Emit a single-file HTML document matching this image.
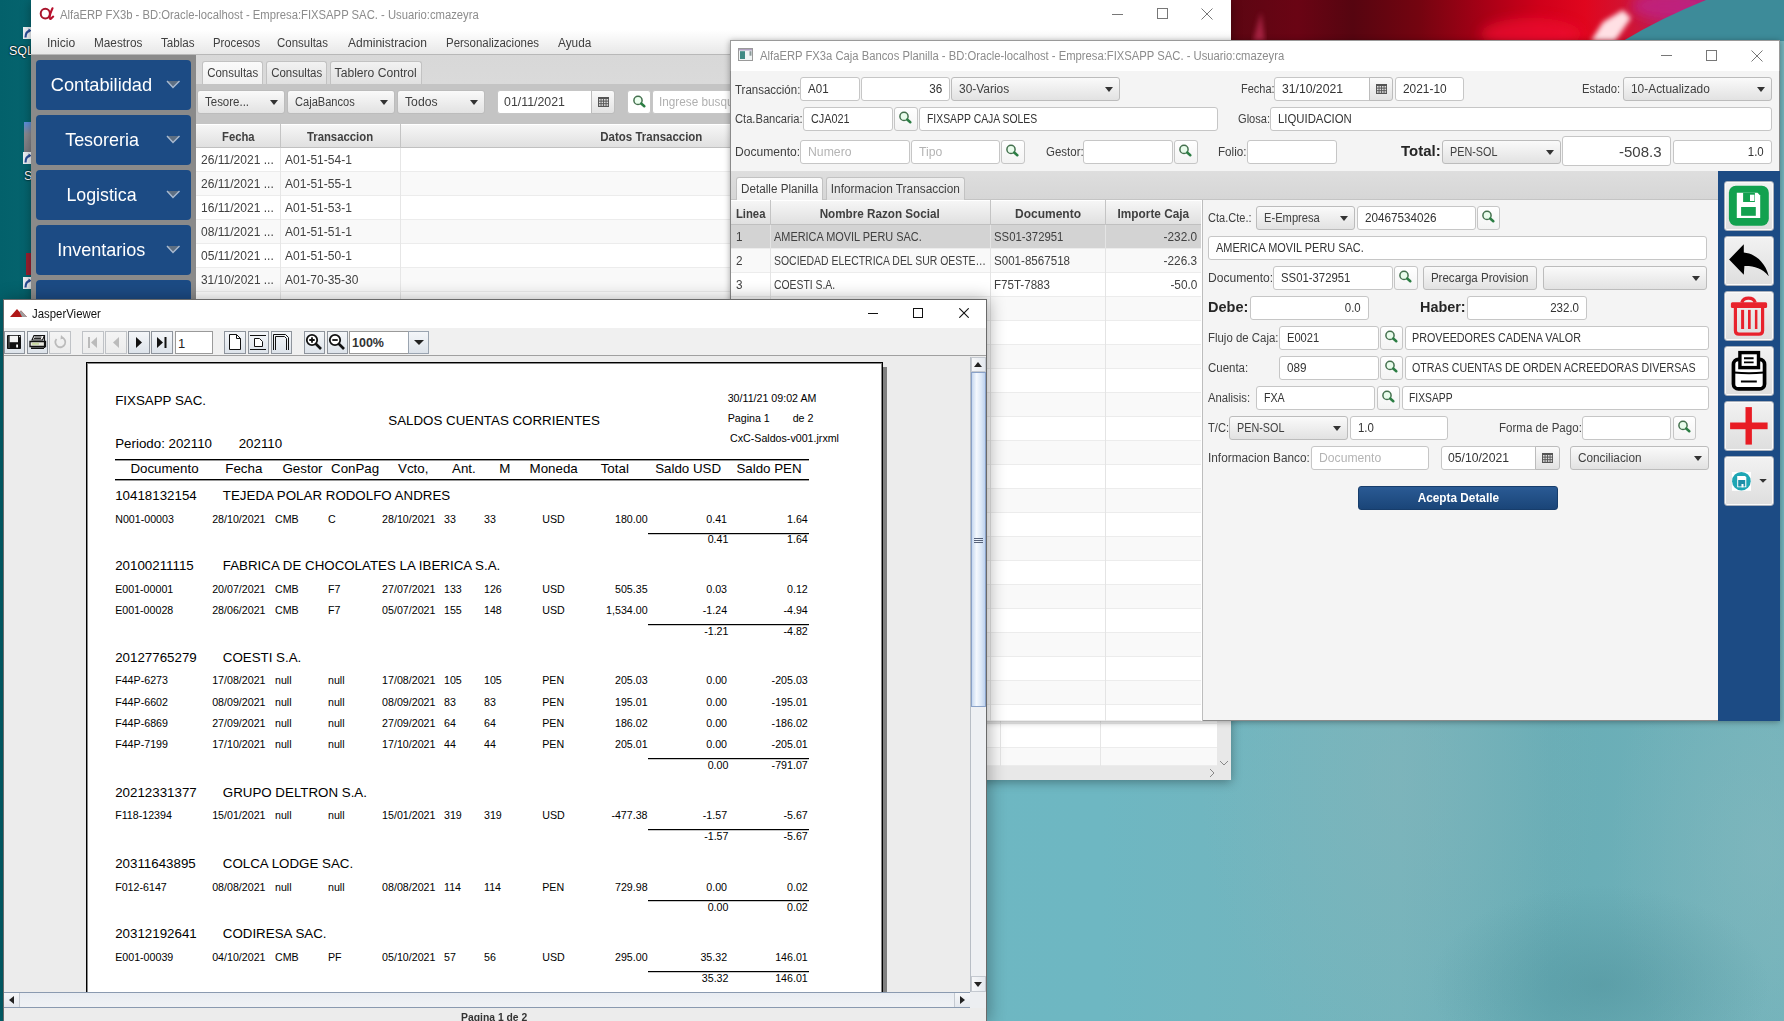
<!DOCTYPE html>
<html><head><meta charset="utf-8">
<style>
*{margin:0;padding:0;box-sizing:border-box}
html,body{width:1784px;height:1021px;overflow:hidden;position:relative;font-family:"Liberation Sans",sans-serif;color:#333}
.a{position:absolute}
.t{position:absolute;white-space:nowrap;line-height:1}
.tf{position:absolute;background:#fff;border:1px solid #c6c6c6;border-radius:3px}
.bt{position:absolute;background:linear-gradient(#fafafa,#e2e2e2);border:1px solid #bcbcbc;border-radius:3px}
.arr{position:absolute;width:0;height:0;border-left:4px solid transparent;border-right:4px solid transparent;border-top:5px solid #333}
.ui{font-size:12.5px;color:#333}
.ph{color:#b0b0b0}
.sb{position:absolute;background:#1c4b84;border-radius:4px}
.sbt{position:absolute;color:#fff;font-size:19px;white-space:nowrap;line-height:1}
.rep{position:absolute;white-space:nowrap;line-height:1;color:#000}
.r10{font-size:13.3px}
.r8{font-size:10.6px}
</style></head><body>

<div class="a" style="left:0;top:0;width:1784px;height:1021px;background:radial-gradient(ellipse 170px 100px at 1600px 985px,rgba(70,135,145,.4),rgba(70,135,145,0)),radial-gradient(ellipse 200px 300px at 1400px 780px,rgba(135,180,185,.45),rgba(135,180,185,0)),radial-gradient(ellipse 150px 250px at 1760px 850px,rgba(135,185,190,.5),rgba(135,185,190,0)),linear-gradient(90deg,#6cb8c3 0px,#6eb7c2 1100px,#74b4bc 1400px,#68adb6 1550px,#73b3bb 1784px)"></div>
<div class="a" style="left:0;top:0;width:32px;height:1021px;background:linear-gradient(90deg,#03616b,#05646e)"></div>
<svg class="a" style="left:23px;top:27px" width="9" height="12"><rect x="0" y="0" width="9" height="12" fill="#eef2f6"/><path d="M2.5 10.5Q2.5 4.5 7 3.5" stroke="#2a4f9a" stroke-width="2.2" fill="none"/><path d="M5.5 1.5L8.5 3.5L5.5 6Z" fill="#2a4f9a"/></svg>
<div class="t" style="left:9px;top:45px;font-size:12.5px;color:#fff;text-shadow:0 0 2px #000,0 0 1px #000">SQL</div>
<div class="a" style="left:24px;top:122px;width:8px;height:30px;background:linear-gradient(#5a90e0,#8a8a90 40%,#7a7a80)"></div>
<svg class="a" style="left:23px;top:152px" width="9" height="12"><rect x="0" y="0" width="9" height="12" fill="#eef2f6"/><path d="M2.5 10.5Q2.5 4.5 7 3.5" stroke="#2a4f9a" stroke-width="2.2" fill="none"/><path d="M5.5 1.5L8.5 3.5L5.5 6Z" fill="#2a4f9a"/></svg>
<div class="t" style="left:24px;top:170px;font-size:12.5px;color:#fff;text-shadow:0 0 2px #000,0 0 1px #000">S</div>
<div class="a" style="left:26px;top:253px;width:6px;height:22px;background:#9a2030"></div>
<svg class="a" style="left:23px;top:277px" width="9" height="12"><rect x="0" y="0" width="9" height="12" fill="#eef2f6"/><path d="M2.5 10.5Q2.5 4.5 7 3.5" stroke="#2a4f9a" stroke-width="2.2" fill="none"/><path d="M5.5 1.5L8.5 3.5L5.5 6Z" fill="#2a4f9a"/></svg>
<svg class="a" style="left:1231px;top:0" width="553" height="41"><defs><filter id="bl" x="-50%" y="-50%" width="200%" height="200%"><feGaussianBlur stdDeviation="6"/></filter><filter id="bl2"><feGaussianBlur stdDeviation="2.5"/></filter><linearGradient id="rg" x1="0" x2="1" y1="0" y2="0"><stop offset="0" stop-color="#5c0612"/><stop offset=".12" stop-color="#6a0414"/><stop offset=".22" stop-color="#560510"/><stop offset=".34" stop-color="#740410"/><stop offset=".46" stop-color="#a80016"/><stop offset=".56" stop-color="#d0001a"/><stop offset=".64" stop-color="#e0061e"/><stop offset=".72" stop-color="#d01434"/><stop offset=".82" stop-color="#b02068"/></linearGradient></defs><rect x="0" y="0" width="553" height="41" fill="url(#rg)"/><ellipse cx="300" cy="34" rx="50" ry="16" fill="#f01030" opacity=".7" filter="url(#bl)"/><ellipse cx="440" cy="6" rx="40" ry="14" fill="#c02080" opacity=".9" filter="url(#bl)"/><path d="M360 41L372 22L392 10L400 18L384 41Z" fill="#ffe0e4" filter="url(#bl2)"/><path d="M22 41L30 12L34 41Z" fill="#e84070" opacity=".5" filter="url(#bl2)"/><path d="M392 41Q430 18 475 0H553V41Z" fill="#3d8b99"/></svg>
<div class="a" style="left:31px;top:0;width:1200px;height:780px;background:#f4f4f4;box-shadow:0 2px 10px rgba(0,0,0,.35)"></div>
<div class="a" style="left:31px;top:0;width:1200px;height:30px;background:#fff"></div>
<svg class="a" style="left:38px;top:6px" width="18" height="15"><ellipse cx="7.3" cy="7.6" rx="4.6" ry="4.9" stroke="#a8142c" stroke-width="2" fill="none"/><path d="M14.5 2.3C12.8 6 11.6 9 11.6 11.5C11.6 13 12.4 13.5 13.4 12.3L15.2 10.6" stroke="#b8102c" stroke-width="2.1" fill="none" stroke-linecap="round"/></svg>
<div class="t" style="left:60.0px;top:8.64px;font-size:12px;color:#8c8c8c;transform:scaleX(0.9396);transform-origin:0 0;">AlfaERP FX3b - BD:Oracle-localhost - Empresa:FIXSAPP SAC. - Usuario:cmazeyra</div>
<div class="a" style="left:1112px;top:14px;width:11px;height:1px;background:#777"></div>
<div class="a" style="left:1157px;top:8px;width:11px;height:11px;border:1px solid #777"></div>
<svg class="a" style="left:1201px;top:8px" width="12" height="12"><path d="M0.5 0.5L11.5 11.5M11.5 0.5L0.5 11.5" stroke="#777" stroke-width="1"/></svg>
<div class="a" style="left:31px;top:30px;width:1200px;height:25px;background:linear-gradient(#ffffff,#f6f6f6 40%,#e8e8e8);border-bottom:1px solid #b8b8b8"></div>
<div class="t" style="left:47.0px;top:36.84px;font-size:12px;color:#404040;transform:scaleX(1.0056);transform-origin:0 0;">Inicio</div>
<div class="t" style="left:94.0px;top:36.84px;font-size:12px;color:#404040;transform:scaleX(0.9821);transform-origin:0 0;">Maestros</div>
<div class="t" style="left:161.0px;top:36.84px;font-size:12px;color:#404040;transform:scaleX(0.9673);transform-origin:0 0;">Tablas</div>
<div class="t" style="left:213.0px;top:36.84px;font-size:12px;color:#404040;transform:scaleX(0.9400);transform-origin:0 0;">Procesos</div>
<div class="t" style="left:277.0px;top:36.84px;font-size:12px;color:#404040;transform:scaleX(0.9552);transform-origin:0 0;">Consultas</div>
<div class="t" style="left:348.0px;top:36.84px;font-size:12px;color:#404040;transform:scaleX(1.0029);transform-origin:0 0;">Administracion</div>
<div class="t" style="left:446.0px;top:36.84px;font-size:12px;color:#404040;transform:scaleX(0.9548);transform-origin:0 0;">Personalizaciones</div>
<div class="t" style="left:558.0px;top:36.84px;font-size:12px;color:#404040;transform:scaleX(0.9852);transform-origin:0 0;">Ayuda</div>
<div class="a" style="left:31px;top:55px;width:165px;height:725px;background:#8a8a8a"></div>
<div class="sb" style="left:36px;top:60px;width:155px;height:50px"></div>
<div class="t" style="left:50.1px;top:76.04px;font-size:18.5px;color:#fff;transform:scaleX(0.9863);transform-origin:50% 0;">Contabilidad</div>
<svg class="a" style="left:166px;top:80px" width="14" height="9"><path d="M1 1L7 7.5L13.5 1Z" fill="#5e6f82" stroke="none"/><path d="M1 1L7 7.5L13.5 1" stroke="#a9bad0" stroke-width="1.4" fill="none"/></svg>
<div class="sb" style="left:36px;top:115px;width:155px;height:50px"></div>
<div class="t" style="left:63.5px;top:131.04px;font-size:18.5px;color:#fff;transform:scaleX(0.9696);transform-origin:50% 0;">Tesoreria</div>
<svg class="a" style="left:166px;top:135px" width="14" height="9"><path d="M1 1L7 7.5L13.5 1Z" fill="#5e6f82" stroke="none"/><path d="M1 1L7 7.5L13.5 1" stroke="#a9bad0" stroke-width="1.4" fill="none"/></svg>
<div class="sb" style="left:36px;top:170px;width:155px;height:50px"></div>
<div class="t" style="left:65.0px;top:186.04px;font-size:18.5px;color:#fff;transform:scaleX(0.9617);transform-origin:50% 0;">Logistica</div>
<svg class="a" style="left:166px;top:190px" width="14" height="9"><path d="M1 1L7 7.5L13.5 1Z" fill="#5e6f82" stroke="none"/><path d="M1 1L7 7.5L13.5 1" stroke="#a9bad0" stroke-width="1.4" fill="none"/></svg>
<div class="sb" style="left:36px;top:225px;width:155px;height:50px"></div>
<div class="t" style="left:56.3px;top:241.04px;font-size:18.5px;color:#fff;transform:scaleX(0.9742);transform-origin:50% 0;">Inventarios</div>
<svg class="a" style="left:166px;top:245px" width="14" height="9"><path d="M1 1L7 7.5L13.5 1Z" fill="#5e6f82" stroke="none"/><path d="M1 1L7 7.5L13.5 1" stroke="#a9bad0" stroke-width="1.4" fill="none"/></svg>
<div class="sb" style="left:36px;top:280px;width:155px;height:50px"></div>
<div class="a" style="left:196px;top:55px;width:1035px;height:725px;background:#c4c4c4"></div>
<div class="a" style="left:196px;top:55px;width:1035px;height:29px;background:linear-gradient(#d8d8d8,#dadada)"></div>
<div class="a" style="left:202px;top:61px;width:61px;height:23px;background:linear-gradient(#fbfbfb,#f0f0f0);border:1px solid #c2c2c2;border-bottom:none;border-radius:3px 3px 0 0"></div>
<div class="t" style="left:205.8px;top:66.84px;font-size:12px;color:#404040;transform:scaleX(0.9552);transform-origin:50% 0;">Consultas</div>
<div class="a" style="left:266px;top:61px;width:61px;height:23px;background:linear-gradient(#f2f2f2,#e0e0e0);border:1px solid #c2c2c2;border-bottom:none;border-radius:3px 3px 0 0"></div>
<div class="t" style="left:269.8px;top:66.84px;font-size:12px;color:#404040;transform:scaleX(0.9552);transform-origin:50% 0;">Consultas</div>
<div class="a" style="left:330px;top:61px;width:92px;height:23px;background:linear-gradient(#f2f2f2,#e0e0e0);border:1px solid #c2c2c2;border-bottom:none;border-radius:3px 3px 0 0"></div>
<div class="t" style="left:335.3px;top:66.84px;font-size:12px;color:#404040;transform:scaleX(1.0104);transform-origin:50% 0;">Tablero Control</div>
<div class="bt" style="left:197px;top:90px;width:88px;height:24px"></div>
<div class="t" style="left:205.0px;top:95.84px;font-size:12px;color:#404040;transform:scaleX(0.9567);transform-origin:0 0;">Tesore...</div>
<div class="arr" style="left:270px;top:100px"></div>
<div class="bt" style="left:287px;top:90px;width:108px;height:24px"></div>
<div class="t" style="left:295.0px;top:95.84px;font-size:12px;color:#404040;transform:scaleX(0.9236);transform-origin:0 0;">CajaBancos</div>
<div class="arr" style="left:380px;top:100px"></div>
<div class="bt" style="left:397px;top:90px;width:88px;height:24px"></div>
<div class="t" style="left:405.0px;top:95.84px;font-size:12px;color:#404040;transform:scaleX(1.0176);transform-origin:0 0;">Todos</div>
<div class="arr" style="left:470px;top:100px"></div>
<div class="tf" style="left:497px;top:90px;width:95px;height:24px;border-radius:3px 0 0 3px"></div>
<div class="t" style="left:504.0px;top:95.84px;font-size:12px;color:#404040;transform:scaleX(1.0306);transform-origin:0 0;">01/11/2021</div>
<div class="bt" style="left:591px;top:90px;width:24px;height:24px;border-radius:0 3px 3px 0"></div>
<svg class="a" style="left:598px;top:97px" width="11" height="10"><rect x="0" y="0" width="11" height="10" fill="#555"/><rect x="1.0" y="2.0" width="1.6" height="1.6" fill="#ddd"/><rect x="3.5" y="2.0" width="1.6" height="1.6" fill="#ddd"/><rect x="6.0" y="2.0" width="1.6" height="1.6" fill="#ddd"/><rect x="8.5" y="2.0" width="1.6" height="1.6" fill="#ddd"/><rect x="1.0" y="4.6" width="1.6" height="1.6" fill="#ddd"/><rect x="3.5" y="4.6" width="1.6" height="1.6" fill="#ddd"/><rect x="6.0" y="4.6" width="1.6" height="1.6" fill="#ddd"/><rect x="8.5" y="4.6" width="1.6" height="1.6" fill="#ddd"/><rect x="1.0" y="7.2" width="1.6" height="1.6" fill="#ddd"/><rect x="3.5" y="7.2" width="1.6" height="1.6" fill="#ddd"/><rect x="6.0" y="7.2" width="1.6" height="1.6" fill="#ddd"/><rect x="8.5" y="7.2" width="1.6" height="1.6" fill="#ddd"/></svg>
<div class="tf" style="left:627px;top:90px;width:24px;height:24px"></div>
<svg class="a" style="left:632px;top:95px" width="16" height="16"><circle cx="6" cy="5.4" r="4.1" stroke="#44704e" stroke-width="1.5" fill="rgba(200,255,210,.35)"/><path d="M9.2 8.6L12.3 11.2" stroke="#2c7e44" stroke-width="2.6" stroke-linecap="round"/></svg>
<div class="tf" style="left:652px;top:90px;width:200px;height:24px"></div>
<div class="t" style="left:659.0px;top:95.84px;font-size:12px;color:#b0b0b0;transform:scaleX(0.9799);transform-origin:0 0;">Ingrese busqueda</div>
<div class="a" style="left:196px;top:124px;width:1021px;height:642px;background:#fff"></div>
<div class="a" style="left:196px;top:148px;width:1021px;height:24px;background:#fff;border-bottom:1px solid #ececec"></div>
<div class="a" style="left:196px;top:172px;width:1021px;height:24px;background:#f9f9f9;border-bottom:1px solid #ececec"></div>
<div class="a" style="left:196px;top:196px;width:1021px;height:24px;background:#fff;border-bottom:1px solid #ececec"></div>
<div class="a" style="left:196px;top:220px;width:1021px;height:24px;background:#f9f9f9;border-bottom:1px solid #ececec"></div>
<div class="a" style="left:196px;top:244px;width:1021px;height:24px;background:#fff;border-bottom:1px solid #ececec"></div>
<div class="a" style="left:196px;top:268px;width:1021px;height:24px;background:#f9f9f9;border-bottom:1px solid #ececec"></div>
<div class="a" style="left:196px;top:292px;width:1021px;height:24px;background:#fff;border-bottom:1px solid #ececec"></div>
<div class="a" style="left:196px;top:316px;width:1021px;height:24px;background:#f9f9f9;border-bottom:1px solid #ececec"></div>
<div class="a" style="left:196px;top:340px;width:1021px;height:24px;background:#fff;border-bottom:1px solid #ececec"></div>
<div class="a" style="left:196px;top:364px;width:1021px;height:24px;background:#f9f9f9;border-bottom:1px solid #ececec"></div>
<div class="a" style="left:196px;top:388px;width:1021px;height:24px;background:#fff;border-bottom:1px solid #ececec"></div>
<div class="a" style="left:196px;top:412px;width:1021px;height:24px;background:#f9f9f9;border-bottom:1px solid #ececec"></div>
<div class="a" style="left:196px;top:436px;width:1021px;height:24px;background:#fff;border-bottom:1px solid #ececec"></div>
<div class="a" style="left:196px;top:460px;width:1021px;height:24px;background:#f9f9f9;border-bottom:1px solid #ececec"></div>
<div class="a" style="left:196px;top:484px;width:1021px;height:24px;background:#fff;border-bottom:1px solid #ececec"></div>
<div class="a" style="left:196px;top:508px;width:1021px;height:24px;background:#f9f9f9;border-bottom:1px solid #ececec"></div>
<div class="a" style="left:196px;top:532px;width:1021px;height:24px;background:#fff;border-bottom:1px solid #ececec"></div>
<div class="a" style="left:196px;top:556px;width:1021px;height:24px;background:#f9f9f9;border-bottom:1px solid #ececec"></div>
<div class="a" style="left:196px;top:580px;width:1021px;height:24px;background:#fff;border-bottom:1px solid #ececec"></div>
<div class="a" style="left:196px;top:604px;width:1021px;height:24px;background:#f9f9f9;border-bottom:1px solid #ececec"></div>
<div class="a" style="left:196px;top:628px;width:1021px;height:24px;background:#fff;border-bottom:1px solid #ececec"></div>
<div class="a" style="left:196px;top:652px;width:1021px;height:24px;background:#f9f9f9;border-bottom:1px solid #ececec"></div>
<div class="a" style="left:196px;top:676px;width:1021px;height:24px;background:#fff;border-bottom:1px solid #ececec"></div>
<div class="a" style="left:196px;top:700px;width:1021px;height:24px;background:#f9f9f9;border-bottom:1px solid #ececec"></div>
<div class="a" style="left:196px;top:724px;width:1021px;height:24px;background:#fff;border-bottom:1px solid #ececec"></div>
<div class="a" style="left:196px;top:748px;width:1021px;height:18px;background:#f9f9f9;border-bottom:1px solid #ececec"></div>
<div class="a" style="left:196px;top:124px;width:1021px;height:24px;background:linear-gradient(#f7f7f7,#e0e0e0);border-bottom:1px solid #c0c0c0;box-shadow:inset 0 1px 0 #fff"></div>
<div class="a" style="left:280px;top:148px;width:1px;height:618px;background:#e6e6e6"></div>
<div class="a" style="left:280px;top:124px;width:1px;height:24px;background:#c4c4c4"></div>
<div class="a" style="left:400px;top:148px;width:1px;height:618px;background:#e6e6e6"></div>
<div class="a" style="left:400px;top:124px;width:1px;height:24px;background:#c4c4c4"></div>
<div class="a" style="left:1000px;top:148px;width:1px;height:618px;background:#e6e6e6"></div>
<div class="a" style="left:1000px;top:124px;width:1px;height:24px;background:#c4c4c4"></div>
<div class="a" style="left:1100px;top:148px;width:1px;height:618px;background:#e6e6e6"></div>
<div class="a" style="left:1100px;top:124px;width:1px;height:24px;background:#c4c4c4"></div>
<div class="t" style="left:221.2px;top:130.84px;font-size:12px;color:#404040;font-weight:bold;transform:scaleX(0.9382);transform-origin:50% 0;">Fecha</div>
<div class="t" style="left:305.0px;top:130.84px;font-size:12px;color:#404040;font-weight:bold;transform:scaleX(0.9455);transform-origin:50% 0;">Transaccion</div>
<div class="t" style="left:597.6px;top:130.84px;font-size:12px;color:#404040;font-weight:bold;transform:scaleX(0.9565);transform-origin:50% 0;">Datos Transaccion</div>
<div class="t" style="left:200.5px;top:153.84px;font-size:12px;color:#404040;transform:scaleX(1.0031);transform-origin:0 0;">26/11/2021 ...</div>
<div class="t" style="left:284.5px;top:153.84px;font-size:12px;color:#404040;transform:scaleX(1.0017);transform-origin:0 0;">A01-51-54-1</div>
<div class="t" style="left:200.5px;top:177.84px;font-size:12px;color:#404040;transform:scaleX(1.0031);transform-origin:0 0;">26/11/2021 ...</div>
<div class="t" style="left:284.5px;top:177.84px;font-size:12px;color:#404040;transform:scaleX(1.0017);transform-origin:0 0;">A01-51-55-1</div>
<div class="t" style="left:200.5px;top:201.84px;font-size:12px;color:#404040;transform:scaleX(1.0031);transform-origin:0 0;">16/11/2021 ...</div>
<div class="t" style="left:284.5px;top:201.84px;font-size:12px;color:#404040;transform:scaleX(1.0017);transform-origin:0 0;">A01-51-53-1</div>
<div class="t" style="left:200.5px;top:225.84px;font-size:12px;color:#404040;transform:scaleX(1.0031);transform-origin:0 0;">08/11/2021 ...</div>
<div class="t" style="left:284.5px;top:225.84px;font-size:12px;color:#404040;transform:scaleX(1.0017);transform-origin:0 0;">A01-51-51-1</div>
<div class="t" style="left:200.5px;top:249.84px;font-size:12px;color:#404040;transform:scaleX(1.0031);transform-origin:0 0;">05/11/2021 ...</div>
<div class="t" style="left:284.5px;top:249.84px;font-size:12px;color:#404040;transform:scaleX(1.0017);transform-origin:0 0;">A01-51-50-1</div>
<div class="t" style="left:200.5px;top:273.84px;font-size:12px;color:#404040;transform:scaleX(0.9910);transform-origin:0 0;">31/10/2021 ...</div>
<div class="t" style="left:284.5px;top:273.84px;font-size:12px;color:#404040;transform:scaleX(0.9994);transform-origin:0 0;">A01-70-35-30</div>
<div class="a" style="left:1217px;top:124px;width:14px;height:656px;background:#e8e8e8"></div>
<div class="a" style="left:196px;top:766px;width:1035px;height:14px;background:#e8e8e8"></div>
<svg class="a" style="left:1207px;top:768px" width="10" height="10"><path d="M3 1L7 5L3 9" stroke="#888" stroke-width="1" fill="none"/></svg>
<svg class="a" style="left:1219px;top:758px" width="10" height="10"><path d="M1 3L5 7L9 3" stroke="#888" stroke-width="1" fill="none"/></svg>
<div class="a" style="left:730px;top:40px;width:1050px;height:681px;background:#f4f4f4;box-shadow:0 1px 6px rgba(0,0,0,.35);border:1px solid #8a8a8a"></div>
<div class="a" style="left:730px;top:40px;width:1050px;height:31px;background:#fff;border:1px solid #9a9a9a;border-bottom:none"></div>
<svg class="a" style="left:738px;top:48px" width="15" height="13"><rect x="0.5" y="0.5" width="14" height="12" fill="#f0f4f4" stroke="#9a9a9a"/><rect x="1" y="1" width="13" height="1.5" fill="#b0a0c0"/><rect x="2" y="3.2" width="5" height="7.8" fill="#3f8a84"/><rect x="11.5" y="3.2" width="2" height="4.5" fill="#8a9898"/></svg>
<div class="t" style="left:759.5px;top:49.84px;font-size:12px;color:#8c8c8c;transform:scaleX(0.9376);transform-origin:0 0;">AlfaERP FX3a Caja Bancos Planilla - BD:Oracle-localhost - Empresa:FIXSAPP SAC. - Usuario:cmazeyra</div>
<div class="a" style="left:1661px;top:55px;width:11px;height:1px;background:#777"></div>
<div class="a" style="left:1706px;top:50px;width:11px;height:11px;border:1px solid #777"></div>
<svg class="a" style="left:1751px;top:50px" width="12" height="12"><path d="M0.5 0.5L11.5 11.5M11.5 0.5L0.5 11.5" stroke="#777" stroke-width="1"/></svg>
<div class="t" style="left:735.0px;top:83.64px;font-size:12px;color:#404040;transform:scaleX(0.9571);transform-origin:0 0;">Transacción:</div>
<div class="tf" style="left:800px;top:77px;width:60px;height:24px;"></div>
<div class="t" style="left:808.0px;top:83.34px;font-size:12px;color:#333;transform:scaleX(0.9663);transform-origin:0 0;">A01</div>
<div class="tf" style="left:861px;top:77px;width:89px;height:24px;"></div>
<div class="t" style="left:928.7px;top:83.34px;font-size:12px;color:#333;transform:scaleX(0.9758);transform-origin:100% 0;">36</div>
<div class="bt" style="left:951px;top:77px;width:169px;height:24px"></div>
<div class="t" style="left:959.0px;top:83.34px;font-size:12px;color:#404040;transform:scaleX(0.9952);transform-origin:0 0;">30-Varios</div>
<div class="arr" style="left:1105px;top:87.0px"></div>
<div class="t" style="left:1240.5px;top:83.34px;font-size:12px;color:#404040;transform:scaleX(0.9146);transform-origin:0 0;">Fecha:</div>
<div class="tf" style="left:1274px;top:77px;width:96px;height:24px;border-radius:3px 0 0 3px"></div>
<div class="t" style="left:1282.0px;top:83.34px;font-size:12px;color:#333;transform:scaleX(1.0153);transform-origin:0 0;">31/10/2021</div>
<div class="bt" style="left:1369px;top:77px;width:24px;height:24px;border-radius:0 3px 3px 0"></div>
<svg class="a" style="left:1376px;top:84px" width="11" height="10"><rect x="0" y="0" width="11" height="10" fill="#555"/><rect x="1.0" y="2.0" width="1.6" height="1.6" fill="#ddd"/><rect x="3.5" y="2.0" width="1.6" height="1.6" fill="#ddd"/><rect x="6.0" y="2.0" width="1.6" height="1.6" fill="#ddd"/><rect x="8.5" y="2.0" width="1.6" height="1.6" fill="#ddd"/><rect x="1.0" y="4.6" width="1.6" height="1.6" fill="#ddd"/><rect x="3.5" y="4.6" width="1.6" height="1.6" fill="#ddd"/><rect x="6.0" y="4.6" width="1.6" height="1.6" fill="#ddd"/><rect x="8.5" y="4.6" width="1.6" height="1.6" fill="#ddd"/><rect x="1.0" y="7.2" width="1.6" height="1.6" fill="#ddd"/><rect x="3.5" y="7.2" width="1.6" height="1.6" fill="#ddd"/><rect x="6.0" y="7.2" width="1.6" height="1.6" fill="#ddd"/><rect x="8.5" y="7.2" width="1.6" height="1.6" fill="#ddd"/></svg>
<div class="tf" style="left:1395px;top:77px;width:69px;height:24px;"></div>
<div class="t" style="left:1403.0px;top:83.34px;font-size:12px;color:#333;transform:scaleX(0.9904);transform-origin:0 0;">2021-10</div>
<div class="t" style="left:1582.0px;top:83.34px;font-size:12px;color:#404040;transform:scaleX(0.9376);transform-origin:0 0;">Estado:</div>
<div class="bt" style="left:1623px;top:77px;width:149px;height:24px"></div>
<div class="t" style="left:1631.0px;top:83.34px;font-size:12px;color:#404040;transform:scaleX(0.9921);transform-origin:0 0;">10-Actualizado</div>
<div class="arr" style="left:1757px;top:87.0px"></div>
<div class="t" style="left:735.0px;top:112.84px;font-size:12px;color:#404040;transform:scaleX(0.9289);transform-origin:0 0;">Cta.Bancaria:</div>
<div class="tf" style="left:803px;top:107px;width:90px;height:24px;"></div>
<div class="t" style="left:811.0px;top:113.34px;font-size:12px;color:#333;transform:scaleX(0.9038);transform-origin:0 0;">CJA021</div>
<div class="tf" style="left:894px;top:107px;width:24px;height:24px;background:linear-gradient(#fff,#f3f3f3)"></div>
<svg class="a" style="left:898px;top:111px" width="16" height="16"><circle cx="6" cy="5.4" r="4.1" stroke="#44704e" stroke-width="1.5" fill="rgba(200,255,210,.35)"/><path d="M9.2 8.6L12.3 11.2" stroke="#2c7e44" stroke-width="2.6" stroke-linecap="round"/></svg>
<div class="tf" style="left:919px;top:107px;width:299px;height:24px;"></div>
<div class="t" style="left:927.0px;top:113.34px;font-size:12px;color:#333;transform:scaleX(0.8668);transform-origin:0 0;">FIXSAPP CAJA SOLES</div>
<div class="t" style="left:1238.0px;top:112.84px;font-size:12px;color:#404040;transform:scaleX(0.9244);transform-origin:0 0;">Glosa:</div>
<div class="tf" style="left:1270px;top:107px;width:502px;height:24px;"></div>
<div class="t" style="left:1278.0px;top:113.34px;font-size:12px;color:#333;transform:scaleX(0.9460);transform-origin:0 0;">LIQUIDACION</div>
<div class="t" style="left:735.0px;top:146.34px;font-size:12px;color:#404040;transform:scaleX(1.0066);transform-origin:0 0;">Documento:</div>
<div class="tf" style="left:800px;top:140px;width:110px;height:24px;"></div>
<div class="t" style="left:808.0px;top:146.34px;font-size:12px;color:#b4b4b4;transform:scaleX(1.0203);transform-origin:0 0;">Numero</div>
<div class="tf" style="left:911px;top:140px;width:89px;height:24px;"></div>
<div class="t" style="left:919.0px;top:146.34px;font-size:12px;color:#b4b4b4;transform:scaleX(1.0180);transform-origin:0 0;">Tipo</div>
<div class="tf" style="left:1001px;top:140px;width:24px;height:24px;background:linear-gradient(#fff,#f3f3f3)"></div>
<svg class="a" style="left:1005px;top:144px" width="16" height="16"><circle cx="6" cy="5.4" r="4.1" stroke="#44704e" stroke-width="1.5" fill="rgba(200,255,210,.35)"/><path d="M9.2 8.6L12.3 11.2" stroke="#2c7e44" stroke-width="2.6" stroke-linecap="round"/></svg>
<div class="t" style="left:1045.5px;top:146.34px;font-size:12px;color:#404040;transform:scaleX(0.9573);transform-origin:0 0;">Gestor:</div>
<div class="tf" style="left:1083px;top:140px;width:90px;height:24px;"></div>
<div class="tf" style="left:1174px;top:140px;width:24px;height:24px;background:linear-gradient(#fff,#f3f3f3)"></div>
<svg class="a" style="left:1178px;top:144px" width="16" height="16"><circle cx="6" cy="5.4" r="4.1" stroke="#44704e" stroke-width="1.5" fill="rgba(200,255,210,.35)"/><path d="M9.2 8.6L12.3 11.2" stroke="#2c7e44" stroke-width="2.6" stroke-linecap="round"/></svg>
<div class="t" style="left:1218.0px;top:146.34px;font-size:12px;color:#404040;transform:scaleX(0.9699);transform-origin:0 0;">Folio:</div>
<div class="tf" style="left:1247px;top:140px;width:90px;height:24px;"></div>
<div class="t" style="left:1401.0px;top:144.06px;font-size:14.7px;color:#262626;font-weight:bold;transform:scaleX(1.0190);transform-origin:0 0;">Total:</div>
<div class="bt" style="left:1442px;top:140px;width:119px;height:24px"></div>
<div class="t" style="left:1450.0px;top:146.34px;font-size:12px;color:#404040;transform:scaleX(0.8996);transform-origin:0 0;">PEN-SOL</div>
<div class="arr" style="left:1546px;top:150.0px"></div>
<div class="tf" style="left:1562px;top:136px;width:109px;height:30px"></div>
<div class="t" style="left:1618.5px;top:143.80px;font-size:15px;color:#404040;transform:scaleX(0.9990);transform-origin:100% 0;">-508.3</div>
<div class="tf" style="left:1673px;top:140px;width:99px;height:24px;"></div>
<div class="t" style="left:1747.3px;top:146.34px;font-size:12px;color:#333;transform:scaleX(0.9519);transform-origin:100% 0;">1.0</div>
<div class="a" style="left:731px;top:171px;width:987px;height:29px;background:linear-gradient(#dedede,#d6d6d6);border-bottom:1px solid #c4c4c4"></div>
<div class="a" style="left:736px;top:177px;width:87px;height:23px;background:linear-gradient(#fbfbfb,#f2f2f2);border:1px solid #c2c2c2;border-bottom:none;border-radius:3px 3px 0 0"></div>
<div class="t" style="left:739.8px;top:182.84px;font-size:12px;color:#404040;transform:scaleX(0.9717);transform-origin:50% 0;">Detalle Planilla</div>
<div class="a" style="left:826px;top:177px;width:139px;height:23px;background:linear-gradient(#f0f0f0,#e2e2e2);border:1px solid #c2c2c2;border-bottom:none;border-radius:3px 3px 0 0"></div>
<div class="t" style="left:830.1px;top:182.84px;font-size:12px;color:#404040;transform:scaleX(0.9876);transform-origin:50% 0;">Informacion Transaccion</div>
<div class="a" style="left:731px;top:200px;width:472px;height:521px;background:#fff;border-right:1px solid #bdbdbd"></div>
<div class="a" style="left:731px;top:225px;width:470px;height:24px;background:#d3d3d3;border-bottom:1px solid #ececec"></div>
<div class="a" style="left:731px;top:249px;width:470px;height:24px;background:#f9f9f9;border-bottom:1px solid #ececec"></div>
<div class="a" style="left:731px;top:273px;width:470px;height:24px;background:#fff;border-bottom:1px solid #ececec"></div>
<div class="a" style="left:731px;top:297px;width:470px;height:24px;background:#f9f9f9;border-bottom:1px solid #ececec"></div>
<div class="a" style="left:731px;top:321px;width:470px;height:24px;background:#fff;border-bottom:1px solid #ececec"></div>
<div class="a" style="left:731px;top:345px;width:470px;height:24px;background:#f9f9f9;border-bottom:1px solid #ececec"></div>
<div class="a" style="left:731px;top:369px;width:470px;height:24px;background:#fff;border-bottom:1px solid #ececec"></div>
<div class="a" style="left:731px;top:393px;width:470px;height:24px;background:#f9f9f9;border-bottom:1px solid #ececec"></div>
<div class="a" style="left:731px;top:417px;width:470px;height:24px;background:#fff;border-bottom:1px solid #ececec"></div>
<div class="a" style="left:731px;top:441px;width:470px;height:24px;background:#f9f9f9;border-bottom:1px solid #ececec"></div>
<div class="a" style="left:731px;top:465px;width:470px;height:24px;background:#fff;border-bottom:1px solid #ececec"></div>
<div class="a" style="left:731px;top:489px;width:470px;height:24px;background:#f9f9f9;border-bottom:1px solid #ececec"></div>
<div class="a" style="left:731px;top:513px;width:470px;height:24px;background:#fff;border-bottom:1px solid #ececec"></div>
<div class="a" style="left:731px;top:537px;width:470px;height:24px;background:#f9f9f9;border-bottom:1px solid #ececec"></div>
<div class="a" style="left:731px;top:561px;width:470px;height:24px;background:#fff;border-bottom:1px solid #ececec"></div>
<div class="a" style="left:731px;top:585px;width:470px;height:24px;background:#f9f9f9;border-bottom:1px solid #ececec"></div>
<div class="a" style="left:731px;top:609px;width:470px;height:24px;background:#fff;border-bottom:1px solid #ececec"></div>
<div class="a" style="left:731px;top:633px;width:470px;height:24px;background:#f9f9f9;border-bottom:1px solid #ececec"></div>
<div class="a" style="left:731px;top:657px;width:470px;height:24px;background:#fff;border-bottom:1px solid #ececec"></div>
<div class="a" style="left:731px;top:681px;width:470px;height:24px;background:#f9f9f9;border-bottom:1px solid #ececec"></div>
<div class="a" style="left:731px;top:705px;width:470px;height:16px;background:#fff;border-bottom:1px solid #ececec"></div>
<div class="a" style="left:731px;top:200px;width:470px;height:25px;background:linear-gradient(#f7f7f7,#e0e0e0);border-bottom:1px solid #c0c0c0;box-shadow:inset 0 1px 0 #fff"></div>
<div class="a" style="left:770px;top:225px;width:1px;height:496px;background:#e4e4e4"></div>
<div class="a" style="left:770px;top:200px;width:1px;height:25px;background:#c4c4c4"></div>
<div class="a" style="left:990px;top:225px;width:1px;height:496px;background:#e4e4e4"></div>
<div class="a" style="left:990px;top:200px;width:1px;height:25px;background:#c4c4c4"></div>
<div class="a" style="left:1105px;top:225px;width:1px;height:496px;background:#e4e4e4"></div>
<div class="a" style="left:1105px;top:200px;width:1px;height:25px;background:#c4c4c4"></div>
<div class="t" style="left:734.8px;top:207.84px;font-size:12px;color:#404040;font-weight:bold;transform:scaleX(0.9417);transform-origin:50% 0;">Linea</div>
<div class="t" style="left:818.3px;top:207.84px;font-size:12px;color:#404040;font-weight:bold;transform:scaleX(0.9733);transform-origin:50% 0;">Nombre Razon Social</div>
<div class="t" style="left:1014.5px;top:207.84px;font-size:12px;color:#404040;font-weight:bold;transform:scaleX(1.0001);transform-origin:50% 0;">Documento</div>
<div class="t" style="left:1116.7px;top:207.84px;font-size:12px;color:#404040;font-weight:bold;transform:scaleX(0.9845);transform-origin:50% 0;">Importe Caja</div>
<div class="t" style="left:735.5px;top:231.34px;font-size:12px;color:#404040;transform:scaleX(0.9758);transform-origin:0 0;">1</div>
<div class="t" style="left:774.3px;top:231.34px;font-size:12px;color:#404040;transform:scaleX(0.9103);transform-origin:0 0;">AMERICA MOVIL PERU SAC.</div>
<div class="t" style="left:994.0px;top:231.34px;font-size:12px;color:#404040;transform:scaleX(0.9451);transform-origin:0 0;">SS01-372951</div>
<div class="t" style="left:1163.0px;top:231.34px;font-size:12px;color:#404040;transform:scaleX(0.9830);transform-origin:100% 0;">-232.0</div>
<div class="t" style="left:735.5px;top:255.34px;font-size:12px;color:#404040;transform:scaleX(0.9758);transform-origin:0 0;">2</div>
<div class="t" style="left:774.3px;top:255.34px;font-size:12px;color:#404040;transform:scaleX(0.8701);transform-origin:0 0;">SOCIEDAD ELECTRICA DEL SUR OESTE…</div>
<div class="t" style="left:994.0px;top:255.34px;font-size:12px;color:#404040;transform:scaleX(0.9656);transform-origin:0 0;">S001-8567518</div>
<div class="t" style="left:1163.0px;top:255.34px;font-size:12px;color:#404040;transform:scaleX(0.9830);transform-origin:100% 0;">-226.3</div>
<div class="t" style="left:735.5px;top:279.34px;font-size:12px;color:#404040;transform:scaleX(0.9758);transform-origin:0 0;">3</div>
<div class="t" style="left:774.3px;top:279.34px;font-size:12px;color:#404040;transform:scaleX(0.8657);transform-origin:0 0;">COESTI S.A.</div>
<div class="t" style="left:994.0px;top:279.34px;font-size:12px;color:#404040;transform:scaleX(0.9645);transform-origin:0 0;">F75T-7883</div>
<div class="t" style="left:1169.6px;top:279.34px;font-size:12px;color:#404040;transform:scaleX(0.9848);transform-origin:100% 0;">-50.0</div>
<div class="t" style="left:1208.0px;top:212.34px;font-size:12px;color:#404040;transform:scaleX(0.9204);transform-origin:0 0;">Cta.Cte.:</div>
<div class="bt" style="left:1256px;top:206px;width:99px;height:24px"></div>
<div class="t" style="left:1264.0px;top:212.34px;font-size:12px;color:#404040;transform:scaleX(0.9292);transform-origin:0 0;">E-Empresa</div>
<div class="arr" style="left:1340px;top:216.0px"></div>
<div class="tf" style="left:1357px;top:206px;width:119px;height:24px;"></div>
<div class="t" style="left:1365.0px;top:212.34px;font-size:12px;color:#333;transform:scaleX(0.9758);transform-origin:0 0;">20467534026</div>
<div class="tf" style="left:1477px;top:206px;width:23px;height:24px;background:linear-gradient(#fff,#f3f3f3)"></div>
<svg class="a" style="left:1481px;top:210px" width="16" height="16"><circle cx="6" cy="5.4" r="4.1" stroke="#44704e" stroke-width="1.5" fill="rgba(200,255,210,.35)"/><path d="M9.2 8.6L12.3 11.2" stroke="#2c7e44" stroke-width="2.6" stroke-linecap="round"/></svg>
<div class="tf" style="left:1208px;top:236px;width:499px;height:24px;"></div>
<div class="t" style="left:1216.0px;top:242.34px;font-size:12px;color:#333;transform:scaleX(0.9103);transform-origin:0 0;">AMERICA MOVIL PERU SAC.</div>
<div class="t" style="left:1208.0px;top:271.94px;font-size:12px;color:#404040;transform:scaleX(1.0066);transform-origin:0 0;">Documento:</div>
<div class="tf" style="left:1273px;top:266px;width:120px;height:24px;"></div>
<div class="t" style="left:1281.0px;top:272.34px;font-size:12px;color:#333;transform:scaleX(0.9451);transform-origin:0 0;">SS01-372951</div>
<div class="tf" style="left:1394px;top:266px;width:24px;height:24px;background:linear-gradient(#fff,#f3f3f3)"></div>
<svg class="a" style="left:1398px;top:270px" width="16" height="16"><circle cx="6" cy="5.4" r="4.1" stroke="#44704e" stroke-width="1.5" fill="rgba(200,255,210,.35)"/><path d="M9.2 8.6L12.3 11.2" stroke="#2c7e44" stroke-width="2.6" stroke-linecap="round"/></svg>
<div class="bt" style="left:1423px;top:266px;width:114px;height:24px"></div>
<div class="t" style="left:1429.3px;top:272.34px;font-size:12px;color:#404040;transform:scaleX(0.9625);transform-origin:50% 0;">Precarga Provision</div>
<div class="bt" style="left:1543px;top:266px;width:164px;height:24px"></div>
<div class="arr" style="left:1692px;top:276.0px"></div>
<div class="t" style="left:1208.0px;top:300.06px;font-size:14.7px;color:#262626;font-weight:bold;transform:scaleX(0.9880);transform-origin:0 0;">Debe:</div>
<div class="tf" style="left:1250px;top:296px;width:119px;height:24px;"></div>
<div class="t" style="left:1343.8px;top:301.84px;font-size:12px;color:#333;transform:scaleX(0.9519);transform-origin:100% 0;">0.0</div>
<div class="t" style="left:1420.0px;top:300.06px;font-size:14.7px;color:#262626;font-weight:bold;transform:scaleX(0.9815);transform-origin:0 0;">Haber:</div>
<div class="tf" style="left:1467px;top:296px;width:120px;height:24px;"></div>
<div class="t" style="left:1549.0px;top:301.84px;font-size:12px;color:#333;transform:scaleX(0.9625);transform-origin:100% 0;">232.0</div>
<div class="t" style="left:1208.0px;top:331.84px;font-size:12px;color:#404040;transform:scaleX(0.9513);transform-origin:0 0;">Flujo de Caja:</div>
<div class="tf" style="left:1279px;top:326px;width:100px;height:24px;"></div>
<div class="t" style="left:1287.0px;top:332.34px;font-size:12px;color:#333;transform:scaleX(0.9270);transform-origin:0 0;">E0021</div>
<div class="tf" style="left:1380px;top:326px;width:23px;height:24px;background:linear-gradient(#fff,#f3f3f3)"></div>
<svg class="a" style="left:1384px;top:330px" width="16" height="16"><circle cx="6" cy="5.4" r="4.1" stroke="#44704e" stroke-width="1.5" fill="rgba(200,255,210,.35)"/><path d="M9.2 8.6L12.3 11.2" stroke="#2c7e44" stroke-width="2.6" stroke-linecap="round"/></svg>
<div class="tf" style="left:1405px;top:326px;width:304px;height:24px;"></div>
<div class="t" style="left:1412.0px;top:332.34px;font-size:12px;color:#333;transform:scaleX(0.8964);transform-origin:0 0;">PROVEEDORES CADENA VALOR</div>
<div class="t" style="left:1208.0px;top:362.34px;font-size:12px;color:#404040;transform:scaleX(0.9552);transform-origin:0 0;">Cuenta:</div>
<div class="tf" style="left:1279px;top:356px;width:100px;height:24px;"></div>
<div class="t" style="left:1287.0px;top:362.34px;font-size:12px;color:#333;transform:scaleX(0.9758);transform-origin:0 0;">089</div>
<div class="tf" style="left:1380px;top:356px;width:23px;height:24px;background:linear-gradient(#fff,#f3f3f3)"></div>
<svg class="a" style="left:1384px;top:360px" width="16" height="16"><circle cx="6" cy="5.4" r="4.1" stroke="#44704e" stroke-width="1.5" fill="rgba(200,255,210,.35)"/><path d="M9.2 8.6L12.3 11.2" stroke="#2c7e44" stroke-width="2.6" stroke-linecap="round"/></svg>
<div class="tf" style="left:1405px;top:356px;width:304px;height:24px;"></div>
<div class="t" style="left:1412.0px;top:362.34px;font-size:12px;color:#333;transform:scaleX(0.8901);transform-origin:0 0;">OTRAS CUENTAS DE ORDEN ACREEDORAS DIVERSAS</div>
<div class="t" style="left:1208.0px;top:392.34px;font-size:12px;color:#404040;transform:scaleX(0.9407);transform-origin:0 0;">Analisis:</div>
<div class="tf" style="left:1256px;top:386px;width:119px;height:24px;"></div>
<div class="t" style="left:1264.0px;top:392.34px;font-size:12px;color:#333;transform:scaleX(0.8885);transform-origin:0 0;">FXA</div>
<div class="tf" style="left:1377px;top:386px;width:23px;height:24px;background:linear-gradient(#fff,#f3f3f3)"></div>
<svg class="a" style="left:1381px;top:390px" width="16" height="16"><circle cx="6" cy="5.4" r="4.1" stroke="#44704e" stroke-width="1.5" fill="rgba(200,255,210,.35)"/><path d="M9.2 8.6L12.3 11.2" stroke="#2c7e44" stroke-width="2.6" stroke-linecap="round"/></svg>
<div class="tf" style="left:1402px;top:386px;width:307px;height:24px;"></div>
<div class="t" style="left:1409.0px;top:392.34px;font-size:12px;color:#333;transform:scaleX(0.8603);transform-origin:0 0;">FIXSAPP</div>
<div class="t" style="left:1208.0px;top:422.04px;font-size:12px;color:#404040;transform:scaleX(0.9289);transform-origin:0 0;">T/C:</div>
<div class="bt" style="left:1229px;top:416px;width:119px;height:24px"></div>
<div class="t" style="left:1237.0px;top:422.34px;font-size:12px;color:#404040;transform:scaleX(0.8996);transform-origin:0 0;">PEN-SOL</div>
<div class="arr" style="left:1333px;top:426.0px"></div>
<div class="tf" style="left:1350px;top:416px;width:98px;height:24px;"></div>
<div class="t" style="left:1358.0px;top:422.34px;font-size:12px;color:#333;transform:scaleX(0.9519);transform-origin:0 0;">1.0</div>
<div class="t" style="left:1499.4px;top:422.04px;font-size:12px;color:#404040;transform:scaleX(0.9628);transform-origin:0 0;">Forma de Pago:</div>
<div class="tf" style="left:1582px;top:416px;width:89px;height:24px;"></div>
<div class="tf" style="left:1673px;top:416px;width:23px;height:24px;background:linear-gradient(#fff,#f3f3f3)"></div>
<svg class="a" style="left:1677px;top:420px" width="16" height="16"><circle cx="6" cy="5.4" r="4.1" stroke="#44704e" stroke-width="1.5" fill="rgba(200,255,210,.35)"/><path d="M9.2 8.6L12.3 11.2" stroke="#2c7e44" stroke-width="2.6" stroke-linecap="round"/></svg>
<div class="t" style="left:1208.0px;top:451.84px;font-size:12px;color:#404040;transform:scaleX(0.9845);transform-origin:0 0;">Informacion Banco:</div>
<div class="tf" style="left:1311px;top:446px;width:118px;height:24px;"></div>
<div class="t" style="left:1319.0px;top:452.34px;font-size:12px;color:#b4b4b4;transform:scaleX(1.0147);transform-origin:0 0;">Documento</div>
<div class="tf" style="left:1441px;top:446px;width:95px;height:24px;border-radius:3px 0 0 3px"></div>
<div class="t" style="left:1448.0px;top:452.34px;font-size:12px;color:#333;transform:scaleX(1.0153);transform-origin:0 0;">05/10/2021</div>
<div class="bt" style="left:1535px;top:446px;width:25px;height:24px;border-radius:0 3px 3px 0"></div>
<svg class="a" style="left:1542px;top:453px" width="11" height="10"><rect x="0" y="0" width="11" height="10" fill="#555"/><rect x="1.0" y="2.0" width="1.6" height="1.6" fill="#ddd"/><rect x="3.5" y="2.0" width="1.6" height="1.6" fill="#ddd"/><rect x="6.0" y="2.0" width="1.6" height="1.6" fill="#ddd"/><rect x="8.5" y="2.0" width="1.6" height="1.6" fill="#ddd"/><rect x="1.0" y="4.6" width="1.6" height="1.6" fill="#ddd"/><rect x="3.5" y="4.6" width="1.6" height="1.6" fill="#ddd"/><rect x="6.0" y="4.6" width="1.6" height="1.6" fill="#ddd"/><rect x="8.5" y="4.6" width="1.6" height="1.6" fill="#ddd"/><rect x="1.0" y="7.2" width="1.6" height="1.6" fill="#ddd"/><rect x="3.5" y="7.2" width="1.6" height="1.6" fill="#ddd"/><rect x="6.0" y="7.2" width="1.6" height="1.6" fill="#ddd"/><rect x="8.5" y="7.2" width="1.6" height="1.6" fill="#ddd"/></svg>
<div class="bt" style="left:1570px;top:446px;width:139px;height:24px"></div>
<div class="t" style="left:1578.0px;top:452.34px;font-size:12px;color:#404040;transform:scaleX(0.9813);transform-origin:0 0;">Conciliacion</div>
<div class="arr" style="left:1694px;top:456.0px"></div>
<div class="a" style="left:1358px;top:486px;width:200px;height:24px;background:linear-gradient(#2a5a94,#1a4578);border-radius:3px;border:1px solid #173d6b"></div>
<div class="t" style="left:1416.7px;top:491.64px;font-size:12px;color:#fff;font-weight:bold;transform:scaleX(0.9836);transform-origin:50% 0;">Acepta Detalle</div>
<div class="a" style="left:1718px;top:171px;width:62px;height:550px;background:#1c4b84"></div>
<div class="a" style="left:1724px;top:181px;width:50px;height:50px;background:linear-gradient(#f2f2f2,#dedede);border:1px solid #a8b0bc;border-radius:3px;box-shadow:inset 0 0 0 1px #fafafa"></div>
<div class="a" style="left:1724px;top:236px;width:50px;height:50px;background:linear-gradient(#f2f2f2,#dedede);border:1px solid #a8b0bc;border-radius:3px;box-shadow:inset 0 0 0 1px #fafafa"></div>
<div class="a" style="left:1724px;top:291px;width:50px;height:50px;background:linear-gradient(#f2f2f2,#dedede);border:1px solid #a8b0bc;border-radius:3px;box-shadow:inset 0 0 0 1px #fafafa"></div>
<div class="a" style="left:1724px;top:346px;width:50px;height:50px;background:linear-gradient(#f2f2f2,#dedede);border:1px solid #a8b0bc;border-radius:3px;box-shadow:inset 0 0 0 1px #fafafa"></div>
<div class="a" style="left:1724px;top:401px;width:50px;height:50px;background:linear-gradient(#f2f2f2,#dedede);border:1px solid #a8b0bc;border-radius:3px;box-shadow:inset 0 0 0 1px #fafafa"></div>
<div class="a" style="left:1724px;top:456px;width:50px;height:50px;background:linear-gradient(#f2f2f2,#dedede);border:1px solid #a8b0bc;border-radius:3px;box-shadow:inset 0 0 0 1px #fafafa"></div>
<svg class="a" style="left:1724px;top:181px" width="50" height="50"><rect x="4.9" y="4.7" width="39.9" height="40.1" rx="7" fill="#12a14f"/><path d="M12.8 11.8H33.5L36.2 14.5V37H12.8Z" fill="#fff"/><rect x="19.1" y="11.8" width="11.8" height="9.2" fill="#12a14f"/><rect x="26" y="13.7" width="4.4" height="6.3" fill="#fff"/><rect x="17.1" y="26" width="14.7" height="8.8" fill="#12a14f"/></svg>
<svg class="a" style="left:1724px;top:236px" width="50" height="50"><path d="M5.1 23.5L19.8 8.3L19.8 16.6C30 17.5 41 25 44.8 40.2C38 32 30 29.8 20.4 30L19.8 38.7Z" fill="#000"/></svg>
<svg class="a" style="left:1724px;top:291px" width="50" height="50"><path d="M17.8 11.5A7 6.2 0 0 1 31.2 11.5" stroke="#e8222c" stroke-width="3.2" fill="none"/><rect x="6.9" y="11.3" width="36.2" height="5.6" rx="1.5" fill="#e8222c"/><path d="M11.4 16.9V39.5Q11.4 43.2 15 43.2H35Q38.6 43.2 38.6 39.5V16.9" stroke="#e8222c" stroke-width="3.2" fill="none"/><rect x="17.1" y="18.9" width="3" height="19.1" fill="#e8222c"/><rect x="24" y="18.9" width="2.7" height="19.1" fill="#e8222c"/><rect x="30.9" y="18.9" width="2.5" height="19.1" fill="#e8222c"/></svg>
<svg class="a" style="left:1724px;top:346px" width="50" height="50"><rect x="9.45" y="13.35" width="31.1" height="29.6" rx="5" fill="#fff" stroke="#000" stroke-width="3.7"/><path d="M10 26.4Q25 28 40 26.4" stroke="#000" stroke-width="2" fill="none"/><rect x="15.9" y="6.6" width="18.6" height="15" fill="#fff" stroke="#000" stroke-width="3.4"/><path d="M20 12.2H29.6M20 16.4H29.6M16.9 35.5H32.8" stroke="#000" stroke-width="1.9"/></svg>
<svg class="a" style="left:1724px;top:401px" width="50" height="50"><rect x="21.5" y="6.1" width="6.4" height="37.5" fill="#e81c24"/><rect x="6.1" y="21.5" width="37.5" height="6.7" fill="#e81c24"/></svg>
<svg class="a" style="left:1724px;top:456px" width="50" height="50"><rect x="8" y="16" width="19" height="18.8" fill="#fff"/><circle cx="17.4" cy="25.2" r="9.3" fill="#1ea6b4"/><path d="M13.2 20H21L22.3 21.3V31.3H13.2Z" fill="#fff"/><rect x="14.2" y="24" width="7" height="6.5" fill="#1e8ea8"/><rect x="17.5" y="28" width="2" height="3.3" fill="#fff"/><path d="M35.3 23H42.8L39 26.7Z" fill="#333"/></svg>
<div class="a" style="left:3px;top:299px;width:984px;height:724px;background:#ececec;border:1px solid #6a6a6a;box-shadow:2px 0 16px rgba(0,0,0,.32)"></div>
<div class="a" style="left:4px;top:300px;width:982px;height:29px;background:#fff"></div>
<svg class="a" style="left:10px;top:308px" width="17" height="9"><path d="M0 9L7 1L9.5 4L11 2.5L17 9Z" fill="#b01818"/><path d="M9.5 4L11 2.5L17 9L12 9Z" fill="#a0a0a0"/></svg>
<div class="t" style="left:31.8px;top:307.64px;font-size:12px;color:#111;transform:scaleX(0.9501);transform-origin:0 0;">JasperViewer</div>
<div class="a" style="left:868px;top:313px;width:10px;height:1px;background:#111"></div>
<div class="a" style="left:913px;top:308px;width:10px;height:10px;border:1px solid #111"></div>
<svg class="a" style="left:959px;top:308px" width="10" height="10"><path d="M0.3 0.3L9.7 9.7M9.7 0.3L0.3 9.7" stroke="#111" stroke-width="1.1"/></svg>
<div class="a" style="left:4px;top:328px;width:982px;height:28px;background:#f0f0f0;border-bottom:1px solid #a0a0a0"></div>
<div class="a" style="left:4px;top:331px;width:21px;height:23px;background:linear-gradient(#f4f6f9,#dde3ea);border:1px solid #8e949c"></div>
<div class="a" style="left:27px;top:331px;width:21px;height:23px;background:linear-gradient(#f4f6f9,#dde3ea);border:1px solid #8e949c"></div>
<div class="a" style="left:49px;top:331px;width:22px;height:23px;background:linear-gradient(#f4f4f4,#ececec);border:1px solid #bfc2c6"></div>
<div class="a" style="left:82px;top:331px;width:22px;height:23px;background:linear-gradient(#f4f4f4,#ececec);border:1px solid #bfc2c6"></div>
<div class="a" style="left:105px;top:331px;width:22px;height:23px;background:linear-gradient(#f4f4f4,#ececec);border:1px solid #bfc2c6"></div>
<div class="a" style="left:128px;top:331px;width:22px;height:23px;background:linear-gradient(#f4f6f9,#dde3ea);border:1px solid #8e949c"></div>
<div class="a" style="left:151px;top:331px;width:22px;height:23px;background:linear-gradient(#f4f6f9,#dde3ea);border:1px solid #8e949c"></div>
<div class="a" style="left:224px;top:331px;width:22px;height:23px;background:linear-gradient(#f4f6f9,#dde3ea);border:1px solid #8e949c"></div>
<div class="a" style="left:248px;top:331px;width:21px;height:23px;background:linear-gradient(#f4f6f9,#dde3ea);border:1px solid #8e949c"></div>
<div class="a" style="left:271px;top:331px;width:21px;height:23px;background:linear-gradient(#f4f6f9,#dde3ea);border:1px solid #8e949c"></div>
<div class="a" style="left:304px;top:331px;width:21px;height:23px;background:linear-gradient(#f4f6f9,#dde3ea);border:1px solid #8e949c"></div>
<div class="a" style="left:327px;top:331px;width:21px;height:23px;background:linear-gradient(#f4f6f9,#dde3ea);border:1px solid #8e949c"></div>
<div class="a" style="left:175px;top:331px;width:38px;height:23px;background:#fff;border:1px solid #9a9a9a"></div>
<div class="t" style="left:178.0px;top:337.00px;font-size:13px;color:#222;transform:scaleX(1.0000);transform-origin:0 0;">1</div>
<div class="a" style="left:349px;top:331px;width:60px;height:23px;background:#fff;border:1px solid #9a9a9a"></div>
<div class="t" style="left:352.0px;top:337.42px;font-size:12.5px;color:#333;font-weight:bold;transform:scaleX(1.0000);transform-origin:0 0;">100%</div>
<div class="a" style="left:408px;top:331px;width:21px;height:23px;background:linear-gradient(#f4f6f9,#dde3ea);border:1px solid #9aa4b0"></div>
<div class="arr" style="left:414px;top:340px;border-left-width:5px;border-right-width:5px;border-top-width:5px;border-top-color:#222"></div>
<svg class="a" style="left:7px;top:335px" width="15" height="15"><rect x="0" y="0" width="14" height="14" rx="0.8" fill="#111"/><rect x="2.6" y="0.8" width="8.4" height="6.4" fill="#f4f4f4"/><rect x="12" y="1" width="1.2" height="1.2" fill="#ddd"/><rect x="1.5" y="1" width="1" height="12" fill="#666"/><rect x="9.2" y="9.5" width="1.8" height="3" fill="#fff"/></svg>
<svg class="a" style="left:29px;top:334px" width="18" height="16"><path d="M5 1.5L15.5 1.5L13.5 6L3 6Z" fill="#fff" stroke="#111" stroke-width="1.1"/><path d="M5.5 3H12.5M5 4.6H12" stroke="#111" stroke-width="1"/><path d="M1 7.5H16.5V12.5H1Z" fill="#e8e8e0" stroke="#111" stroke-width="1.3"/><rect x="3" y="8.8" width="7" height="2" fill="#c8d8a0"/><path d="M2 14.2H15" stroke="#111" stroke-width="1.6"/><path d="M15.5 2V14" stroke="#111" stroke-width="1.2"/></svg>
<svg class="a" style="left:53px;top:335px" width="14" height="14"><path d="M9 2.5A5 5 0 1 1 3.5 4" stroke="#bbb" stroke-width="1.8" fill="none"/><path d="M8 0L11 3L7.5 4.5Z" fill="#bbb"/></svg>
<svg class="a" style="left:88px;top:337px" width="10" height="11"><rect x="0" y="0" width="2" height="11" fill="#bbb"/><path d="M9 0L3 5.5L9 11Z" fill="#bbb"/></svg>
<svg class="a" style="left:113px;top:337px" width="7" height="11"><path d="M6 0L0 5.5L6 11Z" fill="#bbb"/></svg>
<svg class="a" style="left:136px;top:337px" width="7" height="11"><path d="M0 0L6 5.5L0 11Z" fill="#111"/></svg>
<svg class="a" style="left:157px;top:337px" width="10" height="11"><path d="M0 0L6 5.5L0 11Z" fill="#111"/><rect x="7.5" y="0" width="2" height="11" fill="#111"/></svg>
<svg class="a" style="left:229px;top:334px" width="13" height="16"><path d="M0.5 0.5H7.5L11.5 4.5V15.5H0.5Z" fill="#fff" stroke="#111"/><path d="M7.5 0.5V4.5H11.5" fill="none" stroke="#111"/></svg>
<svg class="a" style="left:250px;top:334px" width="17" height="16"><path d="M0 1.5H16M0 15.5H16" stroke="#111"/><path d="M4.5 4.5H9.5L12.5 7.5V12.5H4.5Z" fill="#fff" stroke="#111"/></svg>
<svg class="a" style="left:272px;top:334px" width="18" height="17"><path d="M1.5 16V0.5H13.5L16.5 3.5V16" fill="none" stroke="#111"/><path d="M3.5 16V2.5H12.5L14.5 4.5V16" fill="none" stroke="#111"/></svg>
<svg class="a" style="left:305px;top:333px" width="18" height="18"><circle cx="7" cy="7" r="5.2" fill="#fff" stroke="#111" stroke-width="1.8"/><path d="M4.3 7H9.7M7 4.3V9.7" stroke="#111" stroke-width="1.8"/><path d="M10.5 10.5L16 16" stroke="#111" stroke-width="2.6"/></svg>
<svg class="a" style="left:328px;top:333px" width="18" height="18"><circle cx="7" cy="7" r="5.2" fill="#fff" stroke="#111" stroke-width="1.8"/><path d="M4.3 7H9.7" stroke="#111" stroke-width="1.8"/><path d="M10.5 10.5L16 16" stroke="#111" stroke-width="2.6"/></svg>
<div class="a" style="left:4px;top:357px;width:966px;height:635px;background:#ececec"></div>
<div class="a" style="left:882px;top:367px;width:5px;height:625px;background:#808080"></div>
<div class="a" style="left:86px;top:362px;width:797px;height:640px;background:#fff;border:1px solid #000;border-bottom:none;box-shadow:inset 1px 1px 0 #8a8a8a,inset -1px 0 0 #8a8a8a"></div>
<div class="t" style="left:115.2px;top:394.02px;font-size:13.33px;color:#000;">FIXSAPP SAC.</div>
<div class="t" style="left:388.3px;top:414.02px;font-size:13.33px;color:#000;">SALDOS CUENTAS CORRIENTES</div>
<div class="t" style="left:115.2px;top:436.72px;font-size:13.33px;color:#000;">Periodo: 202110</div>
<div class="t" style="left:238.7px;top:436.72px;font-size:13.33px;color:#000;">202110</div>
<div class="t" style="left:727.7px;top:393.17px;font-size:10.67px;color:#000;">30/11/21 09:02 AM</div>
<div class="t" style="left:727.7px;top:412.67px;font-size:10.67px;color:#000;">Pagina 1</div>
<div class="t" style="left:792.7px;top:412.67px;font-size:10.67px;color:#000;">de 2</div>
<div class="t" style="left:730.0px;top:432.57px;font-size:10.67px;color:#000;">CxC-Saldos-v001.jrxml</div>
<div class="a" style="left:115px;top:459px;width:694px;height:1px;background:#000;box-shadow:0 1px 0 #9a9a9a"></div>
<div class="a" style="left:115px;top:479px;width:694px;height:1px;background:#000;box-shadow:0 1px 0 #9a9a9a"></div>
<div class="t" style="left:130.4px;top:462.02px;font-size:13.33px;color:#000;">Documento</div>
<div class="t" style="left:225.3px;top:462.02px;font-size:13.33px;color:#000;">Fecha</div>
<div class="t" style="left:282.5px;top:462.02px;font-size:13.33px;color:#000;">Gestor</div>
<div class="t" style="left:331.0px;top:462.02px;font-size:13.33px;color:#000;">ConPag</div>
<div class="t" style="left:398.0px;top:462.02px;font-size:13.33px;color:#000;">Vcto,</div>
<div class="t" style="left:452.0px;top:462.02px;font-size:13.33px;color:#000;">Ant.</div>
<div class="t" style="left:499.3px;top:462.02px;font-size:13.33px;color:#000;">M</div>
<div class="t" style="left:529.6px;top:462.02px;font-size:13.33px;color:#000;">Moneda</div>
<div class="t" style="left:600.7px;top:462.02px;font-size:13.33px;color:#000;">Total</div>
<div class="t" style="left:655.2px;top:462.02px;font-size:13.33px;color:#000;">Saldo USD</div>
<div class="t" style="left:736.4px;top:462.02px;font-size:13.33px;color:#000;">Saldo PEN</div>
<div class="t" style="left:115.2px;top:489.12px;font-size:13.33px;color:#000;">10418132154</div>
<div class="t" style="left:222.8px;top:489.12px;font-size:13.33px;color:#000;">TEJEDA POLAR RODOLFO ANDRES</div>
<div class="t" style="left:115.2px;top:513.77px;font-size:10.67px;color:#000;">N001-00003</div>
<div class="t" style="left:212.2px;top:513.77px;font-size:10.67px;color:#000;">28/10/2021</div>
<div class="t" style="left:275.0px;top:513.77px;font-size:10.67px;color:#000;">CMB</div>
<div class="t" style="left:328.0px;top:513.77px;font-size:10.67px;color:#000;">C</div>
<div class="t" style="left:382.1px;top:513.77px;font-size:10.67px;color:#000;">28/10/2021</div>
<div class="t" style="left:444.0px;top:513.77px;font-size:10.67px;color:#000;">33</div>
<div class="t" style="left:484.0px;top:513.77px;font-size:10.67px;color:#000;">33</div>
<div class="t" style="left:542.2px;top:513.77px;font-size:10.67px;color:#000;">USD</div>
<div class="t" style="left:615.0px;top:513.77px;font-size:10.67px;color:#000;">180.00</div>
<div class="t" style="left:706.3px;top:513.77px;font-size:10.67px;color:#000;">0.41</div>
<div class="t" style="left:787.0px;top:513.77px;font-size:10.67px;color:#000;">1.64</div>
<div class="a" style="left:648px;top:533px;width:161px;height:1px;background:#000;box-shadow:0 1px 0 #c8c8c8"></div>
<div class="t" style="left:707.7px;top:534.37px;font-size:10.67px;color:#000;">0.41</div>
<div class="t" style="left:787.0px;top:534.37px;font-size:10.67px;color:#000;">1.64</div>
<div class="t" style="left:115.2px;top:558.92px;font-size:13.33px;color:#000;">20100211115</div>
<div class="t" style="left:222.8px;top:558.92px;font-size:13.33px;color:#000;">FABRICA DE CHOCOLATES LA IBERICA S.A.</div>
<div class="t" style="left:115.2px;top:583.57px;font-size:10.67px;color:#000;">E001-00001</div>
<div class="t" style="left:212.2px;top:583.57px;font-size:10.67px;color:#000;">20/07/2021</div>
<div class="t" style="left:275.0px;top:583.57px;font-size:10.67px;color:#000;">CMB</div>
<div class="t" style="left:328.0px;top:583.57px;font-size:10.67px;color:#000;">F7</div>
<div class="t" style="left:382.1px;top:583.57px;font-size:10.67px;color:#000;">27/07/2021</div>
<div class="t" style="left:444.0px;top:583.57px;font-size:10.67px;color:#000;">133</div>
<div class="t" style="left:484.0px;top:583.57px;font-size:10.67px;color:#000;">126</div>
<div class="t" style="left:542.2px;top:583.57px;font-size:10.67px;color:#000;">USD</div>
<div class="t" style="left:615.0px;top:583.57px;font-size:10.67px;color:#000;">505.35</div>
<div class="t" style="left:706.3px;top:583.57px;font-size:10.67px;color:#000;">0.03</div>
<div class="t" style="left:787.0px;top:583.57px;font-size:10.67px;color:#000;">0.12</div>
<div class="t" style="left:115.2px;top:604.90px;font-size:10.67px;color:#000;">E001-00028</div>
<div class="t" style="left:212.2px;top:604.90px;font-size:10.67px;color:#000;">28/06/2021</div>
<div class="t" style="left:275.0px;top:604.90px;font-size:10.67px;color:#000;">CMB</div>
<div class="t" style="left:328.0px;top:604.90px;font-size:10.67px;color:#000;">F7</div>
<div class="t" style="left:382.1px;top:604.90px;font-size:10.67px;color:#000;">05/07/2021</div>
<div class="t" style="left:444.0px;top:604.90px;font-size:10.67px;color:#000;">155</div>
<div class="t" style="left:484.0px;top:604.90px;font-size:10.67px;color:#000;">148</div>
<div class="t" style="left:542.2px;top:604.90px;font-size:10.67px;color:#000;">USD</div>
<div class="t" style="left:606.1px;top:604.90px;font-size:10.67px;color:#000;">1,534.00</div>
<div class="t" style="left:702.8px;top:604.90px;font-size:10.67px;color:#000;">-1.24</div>
<div class="t" style="left:783.5px;top:604.90px;font-size:10.67px;color:#000;">-4.94</div>
<div class="a" style="left:648px;top:624px;width:161px;height:1px;background:#000;box-shadow:0 1px 0 #c8c8c8"></div>
<div class="t" style="left:704.2px;top:625.50px;font-size:10.67px;color:#000;">-1.21</div>
<div class="t" style="left:783.5px;top:625.50px;font-size:10.67px;color:#000;">-4.82</div>
<div class="t" style="left:115.2px;top:650.72px;font-size:13.33px;color:#000;">20127765279</div>
<div class="t" style="left:222.8px;top:650.72px;font-size:13.33px;color:#000;">COESTI S.A.</div>
<div class="t" style="left:115.2px;top:675.37px;font-size:10.67px;color:#000;">F44P-6273</div>
<div class="t" style="left:212.2px;top:675.37px;font-size:10.67px;color:#000;">17/08/2021</div>
<div class="t" style="left:275.0px;top:675.37px;font-size:10.67px;color:#000;">null</div>
<div class="t" style="left:328.0px;top:675.37px;font-size:10.67px;color:#000;">null</div>
<div class="t" style="left:382.1px;top:675.37px;font-size:10.67px;color:#000;">17/08/2021</div>
<div class="t" style="left:444.0px;top:675.37px;font-size:10.67px;color:#000;">105</div>
<div class="t" style="left:484.0px;top:675.37px;font-size:10.67px;color:#000;">105</div>
<div class="t" style="left:542.2px;top:675.37px;font-size:10.67px;color:#000;">PEN</div>
<div class="t" style="left:615.0px;top:675.37px;font-size:10.67px;color:#000;">205.03</div>
<div class="t" style="left:706.3px;top:675.37px;font-size:10.67px;color:#000;">0.00</div>
<div class="t" style="left:771.6px;top:675.37px;font-size:10.67px;color:#000;">-205.03</div>
<div class="t" style="left:115.2px;top:696.70px;font-size:10.67px;color:#000;">F44P-6602</div>
<div class="t" style="left:212.2px;top:696.70px;font-size:10.67px;color:#000;">08/09/2021</div>
<div class="t" style="left:275.0px;top:696.70px;font-size:10.67px;color:#000;">null</div>
<div class="t" style="left:328.0px;top:696.70px;font-size:10.67px;color:#000;">null</div>
<div class="t" style="left:382.1px;top:696.70px;font-size:10.67px;color:#000;">08/09/2021</div>
<div class="t" style="left:444.0px;top:696.70px;font-size:10.67px;color:#000;">83</div>
<div class="t" style="left:484.0px;top:696.70px;font-size:10.67px;color:#000;">83</div>
<div class="t" style="left:542.2px;top:696.70px;font-size:10.67px;color:#000;">PEN</div>
<div class="t" style="left:615.0px;top:696.70px;font-size:10.67px;color:#000;">195.01</div>
<div class="t" style="left:706.3px;top:696.70px;font-size:10.67px;color:#000;">0.00</div>
<div class="t" style="left:771.6px;top:696.70px;font-size:10.67px;color:#000;">-195.01</div>
<div class="t" style="left:115.2px;top:718.03px;font-size:10.67px;color:#000;">F44P-6869</div>
<div class="t" style="left:212.2px;top:718.03px;font-size:10.67px;color:#000;">27/09/2021</div>
<div class="t" style="left:275.0px;top:718.03px;font-size:10.67px;color:#000;">null</div>
<div class="t" style="left:328.0px;top:718.03px;font-size:10.67px;color:#000;">null</div>
<div class="t" style="left:382.1px;top:718.03px;font-size:10.67px;color:#000;">27/09/2021</div>
<div class="t" style="left:444.0px;top:718.03px;font-size:10.67px;color:#000;">64</div>
<div class="t" style="left:484.0px;top:718.03px;font-size:10.67px;color:#000;">64</div>
<div class="t" style="left:542.2px;top:718.03px;font-size:10.67px;color:#000;">PEN</div>
<div class="t" style="left:615.0px;top:718.03px;font-size:10.67px;color:#000;">186.02</div>
<div class="t" style="left:706.3px;top:718.03px;font-size:10.67px;color:#000;">0.00</div>
<div class="t" style="left:771.6px;top:718.03px;font-size:10.67px;color:#000;">-186.02</div>
<div class="t" style="left:115.2px;top:739.36px;font-size:10.67px;color:#000;">F44P-7199</div>
<div class="t" style="left:212.2px;top:739.36px;font-size:10.67px;color:#000;">17/10/2021</div>
<div class="t" style="left:275.0px;top:739.36px;font-size:10.67px;color:#000;">null</div>
<div class="t" style="left:328.0px;top:739.36px;font-size:10.67px;color:#000;">null</div>
<div class="t" style="left:382.1px;top:739.36px;font-size:10.67px;color:#000;">17/10/2021</div>
<div class="t" style="left:444.0px;top:739.36px;font-size:10.67px;color:#000;">44</div>
<div class="t" style="left:484.0px;top:739.36px;font-size:10.67px;color:#000;">44</div>
<div class="t" style="left:542.2px;top:739.36px;font-size:10.67px;color:#000;">PEN</div>
<div class="t" style="left:615.0px;top:739.36px;font-size:10.67px;color:#000;">205.01</div>
<div class="t" style="left:706.3px;top:739.36px;font-size:10.67px;color:#000;">0.00</div>
<div class="t" style="left:771.6px;top:739.36px;font-size:10.67px;color:#000;">-205.01</div>
<div class="a" style="left:648px;top:758px;width:161px;height:1px;background:#000;box-shadow:0 1px 0 #c8c8c8"></div>
<div class="t" style="left:707.7px;top:759.96px;font-size:10.67px;color:#000;">0.00</div>
<div class="t" style="left:771.6px;top:759.96px;font-size:10.67px;color:#000;">-791.07</div>
<div class="t" style="left:115.2px;top:785.72px;font-size:13.33px;color:#000;">20212331377</div>
<div class="t" style="left:222.8px;top:785.72px;font-size:13.33px;color:#000;">GRUPO DELTRON S.A.</div>
<div class="t" style="left:115.2px;top:810.37px;font-size:10.67px;color:#000;">F118-12394</div>
<div class="t" style="left:212.2px;top:810.37px;font-size:10.67px;color:#000;">15/01/2021</div>
<div class="t" style="left:275.0px;top:810.37px;font-size:10.67px;color:#000;">null</div>
<div class="t" style="left:328.0px;top:810.37px;font-size:10.67px;color:#000;">null</div>
<div class="t" style="left:382.1px;top:810.37px;font-size:10.67px;color:#000;">15/01/2021</div>
<div class="t" style="left:444.0px;top:810.37px;font-size:10.67px;color:#000;">319</div>
<div class="t" style="left:484.0px;top:810.37px;font-size:10.67px;color:#000;">319</div>
<div class="t" style="left:542.2px;top:810.37px;font-size:10.67px;color:#000;">USD</div>
<div class="t" style="left:611.4px;top:810.37px;font-size:10.67px;color:#000;">-477.38</div>
<div class="t" style="left:702.8px;top:810.37px;font-size:10.67px;color:#000;">-1.57</div>
<div class="t" style="left:783.5px;top:810.37px;font-size:10.67px;color:#000;">-5.67</div>
<div class="a" style="left:648px;top:829px;width:161px;height:1px;background:#000;box-shadow:0 1px 0 #c8c8c8"></div>
<div class="t" style="left:704.2px;top:830.97px;font-size:10.67px;color:#000;">-1.57</div>
<div class="t" style="left:783.5px;top:830.97px;font-size:10.67px;color:#000;">-5.67</div>
<div class="t" style="left:115.2px;top:857.02px;font-size:13.33px;color:#000;">20311643895</div>
<div class="t" style="left:222.8px;top:857.02px;font-size:13.33px;color:#000;">COLCA LODGE SAC.</div>
<div class="t" style="left:115.2px;top:881.67px;font-size:10.67px;color:#000;">F012-6147</div>
<div class="t" style="left:212.2px;top:881.67px;font-size:10.67px;color:#000;">08/08/2021</div>
<div class="t" style="left:275.0px;top:881.67px;font-size:10.67px;color:#000;">null</div>
<div class="t" style="left:328.0px;top:881.67px;font-size:10.67px;color:#000;">null</div>
<div class="t" style="left:382.1px;top:881.67px;font-size:10.67px;color:#000;">08/08/2021</div>
<div class="t" style="left:444.0px;top:881.67px;font-size:10.67px;color:#000;">114</div>
<div class="t" style="left:484.0px;top:881.67px;font-size:10.67px;color:#000;">114</div>
<div class="t" style="left:542.2px;top:881.67px;font-size:10.67px;color:#000;">PEN</div>
<div class="t" style="left:615.0px;top:881.67px;font-size:10.67px;color:#000;">729.98</div>
<div class="t" style="left:706.3px;top:881.67px;font-size:10.67px;color:#000;">0.00</div>
<div class="t" style="left:787.0px;top:881.67px;font-size:10.67px;color:#000;">0.02</div>
<div class="a" style="left:648px;top:900px;width:161px;height:1px;background:#000;box-shadow:0 1px 0 #c8c8c8"></div>
<div class="t" style="left:707.7px;top:902.27px;font-size:10.67px;color:#000;">0.00</div>
<div class="t" style="left:787.0px;top:902.27px;font-size:10.67px;color:#000;">0.02</div>
<div class="t" style="left:115.2px;top:927.32px;font-size:13.33px;color:#000;">20312192641</div>
<div class="t" style="left:222.8px;top:927.32px;font-size:13.33px;color:#000;">CODIRESA SAC.</div>
<div class="t" style="left:115.2px;top:951.97px;font-size:10.67px;color:#000;">E001-00039</div>
<div class="t" style="left:212.2px;top:951.97px;font-size:10.67px;color:#000;">04/10/2021</div>
<div class="t" style="left:275.0px;top:951.97px;font-size:10.67px;color:#000;">CMB</div>
<div class="t" style="left:328.0px;top:951.97px;font-size:10.67px;color:#000;">PF</div>
<div class="t" style="left:382.1px;top:951.97px;font-size:10.67px;color:#000;">05/10/2021</div>
<div class="t" style="left:444.0px;top:951.97px;font-size:10.67px;color:#000;">57</div>
<div class="t" style="left:484.0px;top:951.97px;font-size:10.67px;color:#000;">56</div>
<div class="t" style="left:542.2px;top:951.97px;font-size:10.67px;color:#000;">USD</div>
<div class="t" style="left:615.0px;top:951.97px;font-size:10.67px;color:#000;">295.00</div>
<div class="t" style="left:700.4px;top:951.97px;font-size:10.67px;color:#000;">35.32</div>
<div class="t" style="left:775.2px;top:951.97px;font-size:10.67px;color:#000;">146.01</div>
<div class="a" style="left:648px;top:971px;width:161px;height:1px;background:#000;box-shadow:0 1px 0 #c8c8c8"></div>
<div class="t" style="left:701.8px;top:972.57px;font-size:10.67px;color:#000;">35.32</div>
<div class="t" style="left:775.2px;top:972.57px;font-size:10.67px;color:#000;">146.01</div>
<div class="a" style="left:970px;top:357px;width:16px;height:635px;background:#eef0f3;border-left:1px solid #b8bec6"></div>
<div class="a" style="left:971px;top:357px;width:15px;height:15px;background:linear-gradient(90deg,#f6f7f9,#e4e8ee);border:1px solid #c4c9d0"></div>
<div class="arr" style="left:974px;top:362px;border-top:none;border-bottom:5px solid #222;border-left-width:4.5px;border-right-width:4.5px"></div>
<div class="a" style="left:971px;top:372px;width:15px;height:335px;background:linear-gradient(90deg,#c6d8f0,#f4f8fd 35%,#dce8f7 70%,#bed2ee);border:1px solid #8aa2c8"></div>
<div class="a" style="left:974px;top:538px;width:9px;height:1px;background:#56627a;box-shadow:0 2px 0 #56627a,0 4px 0 #56627a"></div>
<div class="a" style="left:971px;top:976px;width:15px;height:16px;background:linear-gradient(90deg,#f6f7f9,#e4e8ee);border:1px solid #c4c9d0"></div>
<div class="arr" style="left:974px;top:982px;border-top-color:#222;border-left-width:4.5px;border-right-width:4.5px"></div>
<div class="a" style="left:4px;top:992px;width:966px;height:16px;background:linear-gradient(#e8ecf2,#f0f2f5);border-top:1px solid #8a9ab0;border-bottom:1px solid #8a9ab0"></div>
<div class="a" style="left:4px;top:993px;width:16px;height:14px;background:linear-gradient(#f6f7f9,#e4e8ee);border-right:1px solid #c4c9d0"></div>
<div class="arr" style="left:9px;top:996px;border:none;border-top:4.5px solid transparent;border-bottom:4.5px solid transparent;border-right:5px solid #222"></div>
<div class="a" style="left:954px;top:993px;width:16px;height:14px;background:linear-gradient(#f6f7f9,#e4e8ee);border-left:1px solid #c4c9d0"></div>
<div class="arr" style="left:960px;top:996px;border:none;border-top:4.5px solid transparent;border-bottom:4.5px solid transparent;border-left:5px solid #222"></div>
<div class="a" style="left:970px;top:992px;width:16px;height:16px;background:#eceef1"></div>
<div class="a" style="left:4px;top:1008px;width:982px;height:13px;background:#ececec"></div>
<div class="t" style="left:459.3px;top:1011.69px;font-size:11px;color:#333;font-weight:bold;transform:scaleX(0.9400);transform-origin:50% 0;">Pagina 1 de 2</div>
</body></html>
